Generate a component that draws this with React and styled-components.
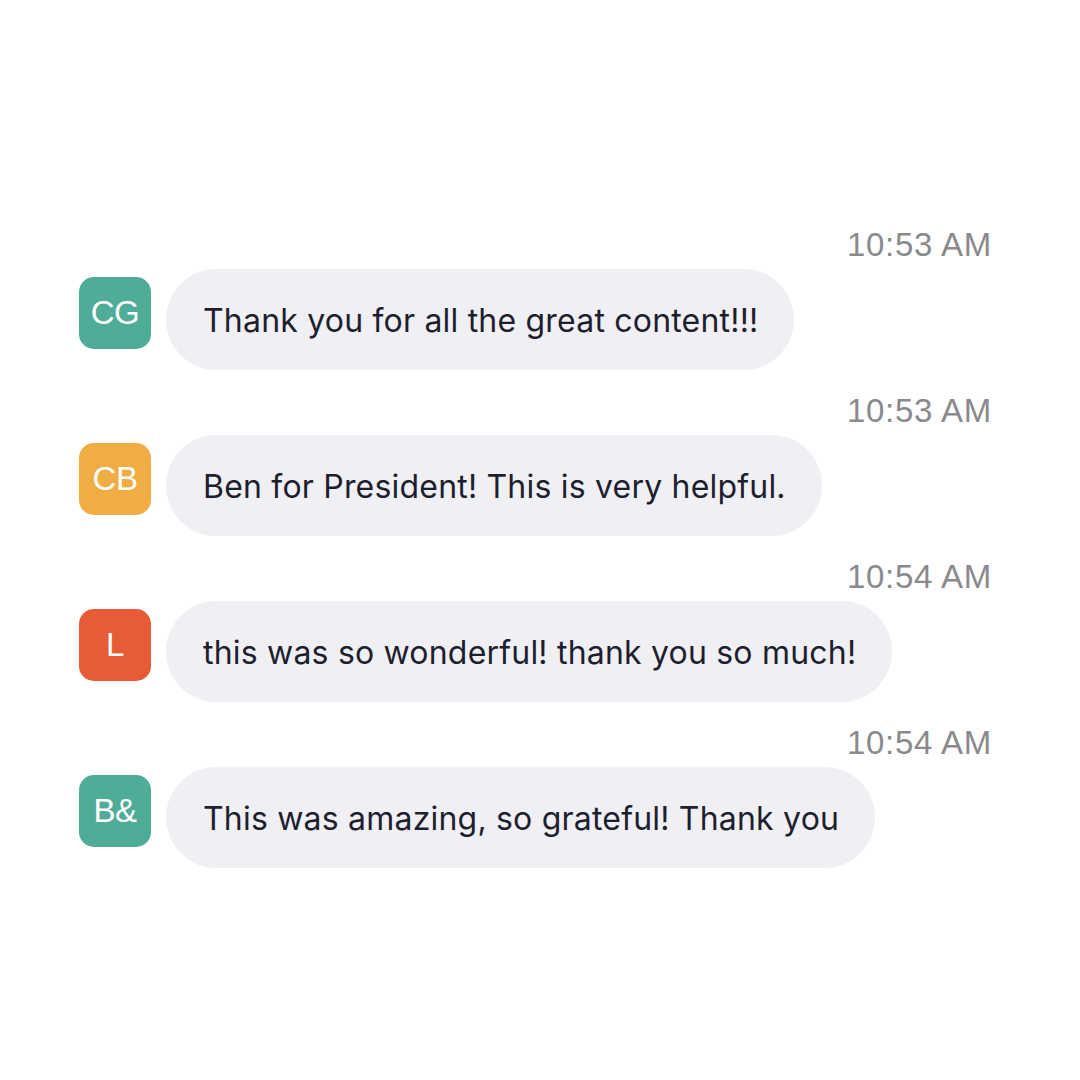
import React from 'react';
import styled, { createGlobalStyle } from 'styled-components';

const GlobalStyle = createGlobalStyle`
  html, body {
    margin: 0;
    padding: 0;
    background: #ffffff;
  }
  #root {
    width: 1080px;
    height: 1080px;
  }
`;

const Page = styled.div`
  width: 1080px;
  height: 1080px;
  box-sizing: border-box;
  padding: 226px 88px 0 79px;
  display: flex;
  flex-direction: column;
  gap: 22px;
  background: #ffffff;
`;

const Message = styled.div`
  display: flex;
  flex-direction: column;
  gap: 5px;
`;

const Time = styled.div`
  align-self: flex-end;
  font-family: 'Liberation Sans', Arial, sans-serif;
  font-size: 33px;
  line-height: 38px;
  letter-spacing: 0.7px;
  color: #8a8a8e;
`;

const Row = styled.div`
  display: flex;
  align-items: flex-start;
  gap: 15px;
`;

const Avatar = styled.div`
  width: 72px;
  height: 72px;
  margin-top: 8px;
  flex: none;
  border-radius: 15px;
  background: ${({ color }) => color};
  color: #ffffff;
  display: flex;
  align-items: center;
  justify-content: center;
  font-family: 'Liberation Sans', Arial, sans-serif;
  font-size: 33px;
  letter-spacing: -0.5px;
`;

const Bubble = styled.div`
  height: 101px;
  box-sizing: border-box;
  padding: 2px 36px 0 37px;
  border-radius: 51px;
  background: #efeff4;
  display: flex;
  align-items: center;
  font-family: Inter, 'Noto Sans', sans-serif;
  font-size: 32px;
  letter-spacing: 0.2px;
  color: #1e1f2e;
  white-space: nowrap;
`;

const messages = [
  { time: '10:53 AM', initials: 'CG', color: '#4fac98', text: 'Thank you for all the great content!!!' },
  { time: '10:53 AM', initials: 'CB', color: '#efad44', text: 'Ben for President! This is very helpful.' },
  { time: '10:54 AM', initials: 'L', color: '#e55c36', text: 'this was so wonderful! thank you so much!' },
  { time: '10:54 AM', initials: 'B&', color: '#4fac98', text: 'This was amazing, so grateful! Thank you' },
];

const App = () => {
  return (
    <>
      <GlobalStyle />
      <Page>
        {messages.map((m, i) => (
          <Message key={i}>
            <Time>{m.time}</Time>
            <Row>
              <Avatar color={m.color}>{m.initials}</Avatar>
              <Bubble>{m.text}</Bubble>
            </Row>
          </Message>
        ))}
      </Page>
    </>
  );
};

export default App;
